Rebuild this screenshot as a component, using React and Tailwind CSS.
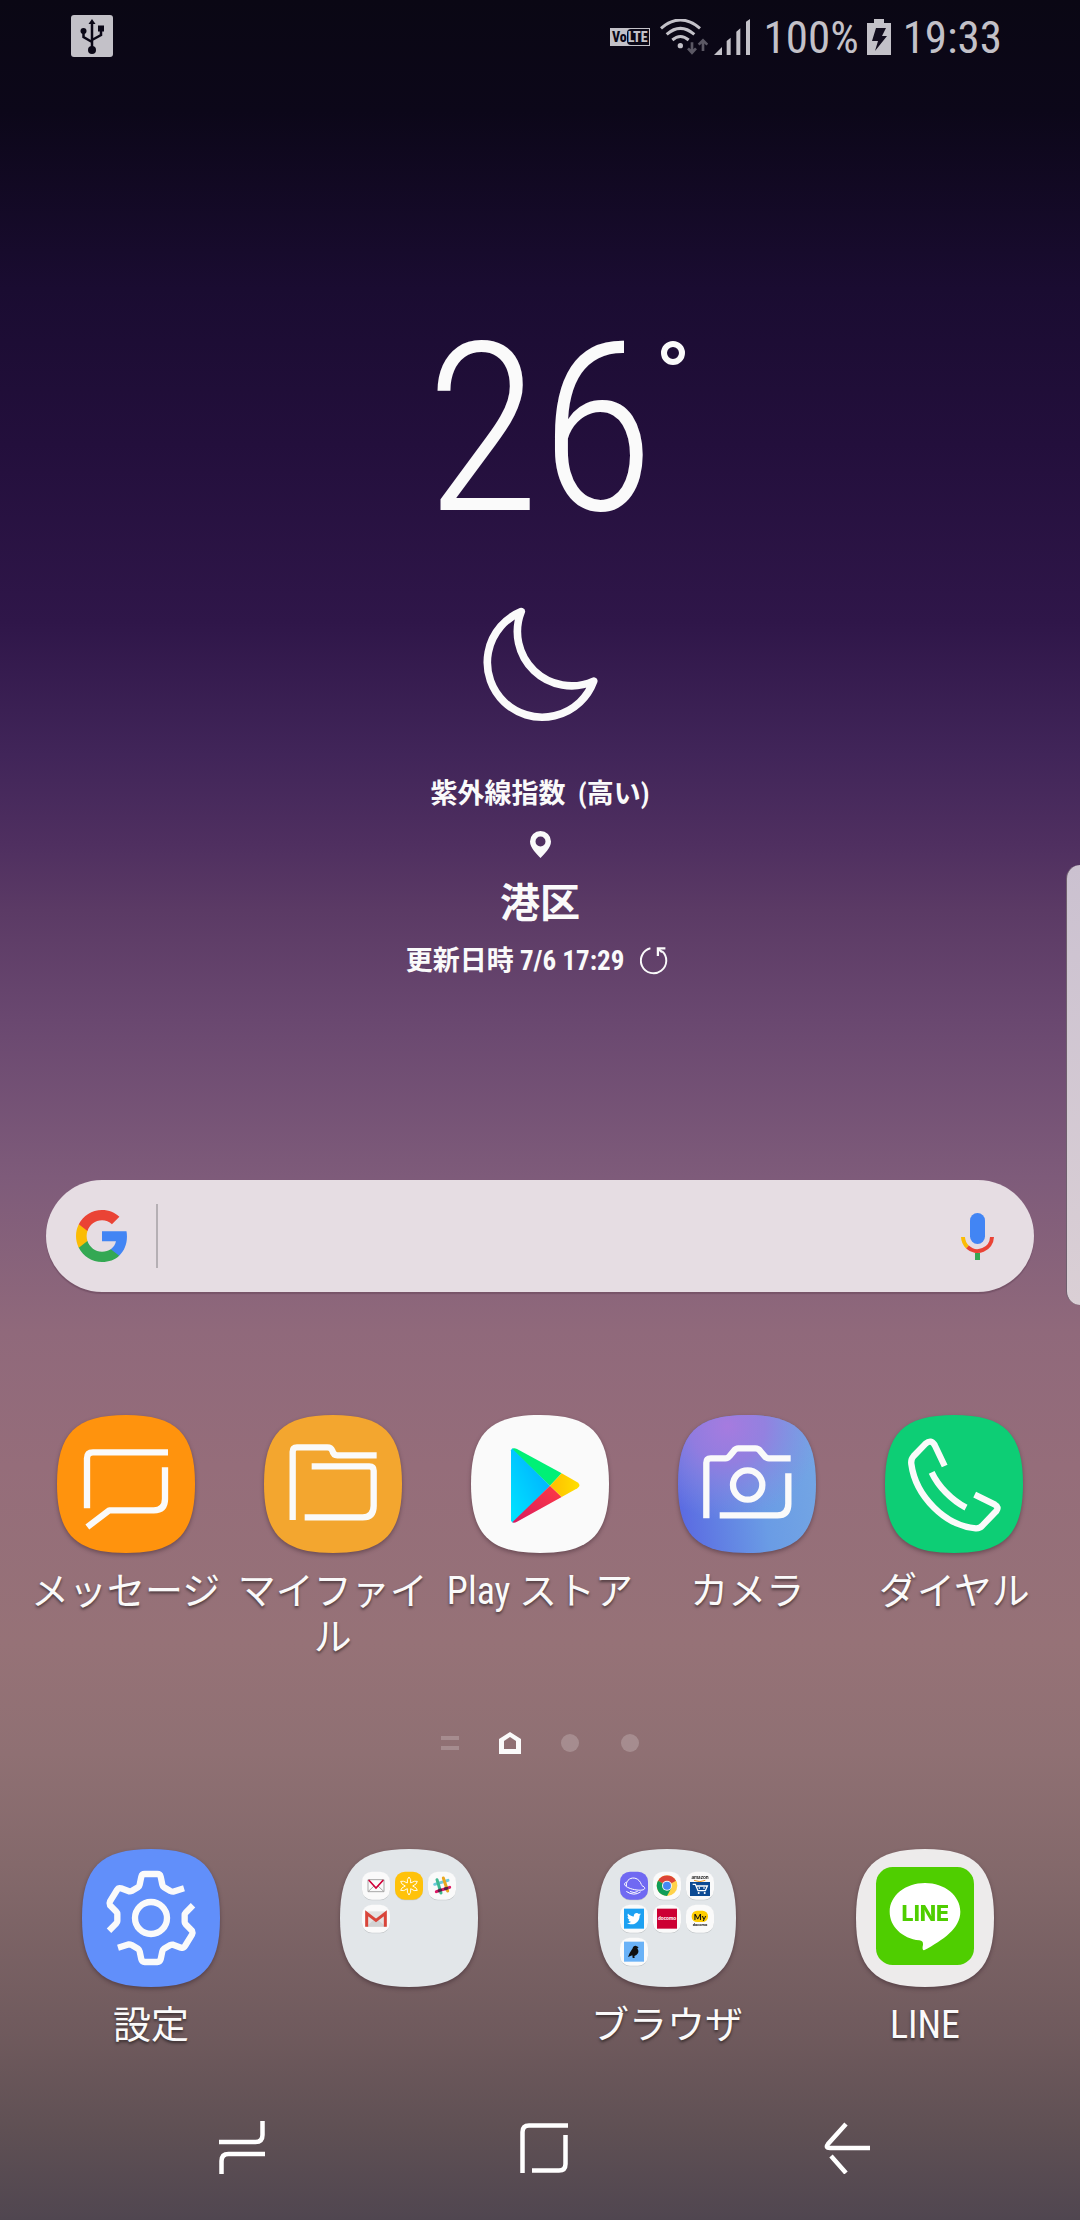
import React from "react";
import { FaTwitter } from "react-icons/fa";

const SQUIRCLE =
  "M0 207 C0 56 56 0 207 0 C358 0 414 56 414 207 C414 358 358 414 207 414 C56 414 0 358 0 207 Z";

function Tile({ fill, children }) {
  return (
    <svg
      viewBox="0 0 414 414"
      className="size-[138px] overflow-visible drop-shadow-[0_2px_2px_rgba(40,20,30,0.4)]"
      fill="none"
      aria-hidden="true"
    >
      <path d={SQUIRCLE} fill={fill} />
      {children}
    </svg>
  );
}

function Lines({ children }) {
  return (
    <g stroke="#fafafa" strokeWidth="19" strokeLinejoin="round">
      {children}
    </g>
  );
}

function Mini({ col, row, fill = "#fafafa", children }) {
  return (
    <g transform={`translate(${66 + col * 99} ${68 + row * 99})`}>
      <rect y="2" width="84" height="84" rx="30" fill="#00000022" />
      <rect width="84" height="84" rx="30" fill={fill} />
      {children}
    </g>
  );
}

function MessagesIcon() {
  return (
    <Tile fill="#ff930d">
      <Lines>
        <path d="M90 280 V130 Q90 112 108 112 H333" />
        <path d="M324 157 V252 Q324 286 290 286 H157 L91 336" />
      </Lines>
    </Tile>
  );
}

function FilesIcon() {
  return (
    <Tile fill="#f3a62f">
      <Lines>
        <path d="M86 315 V110 Q86 97 99 97 H190 Q201 97 205 107 Q208 121 220 121 H338" />
        <path d="M143 154 H316 Q329 154 329 167 V272 Q329 307 296 307 H122" />
      </Lines>
    </Tile>
  );
}

function PlayIcon() {
  return (
    <Tile fill="#fafafa">
      <defs>
        <linearGradient id="playBlue" x1="0" y1="1" x2="1" y2="0">
          <stop offset="0" stopColor="#00e5ff" />
          <stop offset="1" stopColor="#00a8ff" />
        </linearGradient>
        <linearGradient id="playRed" x1="1" y1="0" x2="0" y2="1">
          <stop offset="0" stopColor="#ff3a44" />
          <stop offset="1" stopColor="#d81b60" />
        </linearGradient>
        <linearGradient id="playYellow" x1="1" y1="0" x2="0" y2="0">
          <stop offset="0" stopColor="#ffe000" />
          <stop offset="1" stopColor="#ffbd00" />
        </linearGradient>
      </defs>
      <path d="M120 106 Q121 101 126 100 L237 212 L126 323 Q121 321 120 316 Z" fill="url(#playBlue)" />
      <path d="M124 101 Q130 98 138 102 L272 175 L237 212 Z" fill="#00f076" />
      <path d="M124 322 Q130 325 138 320 L272 246 L237 212 Z" fill="url(#playRed)" />
      <path d="M272 175 L319 202 Q332 211 319 220 L272 246 L237 212 Z" fill="url(#playYellow)" />
    </Tile>
  );
}

function CameraIcon() {
  return (
    <Tile fill="url(#camBase)">
      <defs>
        <linearGradient id="camBase" x1="0" y1="0.6" x2="1" y2="0.45">
          <stop offset="0" stopColor="#5b6be2" />
          <stop offset="0.6" stopColor="#6a9ce5" />
          <stop offset="1" stopColor="#73a5e4" />
        </linearGradient>
        <radialGradient id="camGlow" cx="0.36" cy="0.08" r="0.68">
          <stop offset="0" stopColor="#a67bdf" />
          <stop offset="0.4" stopColor="#9a7cdf" stopOpacity="0.85" />
          <stop offset="1" stopColor="#8a8ce2" stopOpacity="0" />
        </radialGradient>
      </defs>
      <path d={SQUIRCLE} fill="url(#camGlow)" />
      <Lines>
        <path d="M85 310 V143 Q85 130 98 130 H142 Q150 130 155 123 L168 107 Q173 100 181 100 H232 Q241 100 246 107 L260 124 Q265 130 273 130 H338" />
        <path d="M331 175 V266 Q331 301 298 301 H125" />
        <circle cx="209" cy="210" r="44" />
      </Lines>
    </Tile>
  );
}

function PhoneIcon() {
  return (
    <Tile fill="#0dce75">
      <Lines>
        <path d="M179 153 L149 90 Q138 72 122 86 L86 123 Q77 133 79 147 C92 245 182 332 272 340 Q284 341 292 332 L334 288 Q343 276 330 269 L269 239" />
        <path d="M140 172 C160 215 200 255 243 278" />
      </Lines>
    </Tile>
  );
}

function SettingsIcon() {
  const tooth =
    "M306 118 L273 128 Q269 128 265 126 L246 115 Q242 112 241 107 L236 83 Q234 75 226 75 H188 Q180 75 178 83 L173 107 Q172 112 168 115 L149 126 Q145 128 141 127 L117 118 Q109 116 105 123 L84 157 Q81 163 84 169 L103 188 Q106 191 106 195 V216 Q106 220 103 223 L81 245";
  return (
    <Tile fill="#618ffa">
      <Lines>
        <path d={tooth} />
        <path d={tooth} transform="rotate(180 207 207)" />
        <circle cx="207" cy="207" r="48" />
      </Lines>
    </Tile>
  );
}

function MailFolderIcon() {
  return (
    <Tile fill="#e2e6e9">
      <Mini col={0} row={0}>
        <path d="M18 24 H66 V60 H18 Z M18 60 L36 43 M66 60 L48 43" stroke="#a8a8a8" strokeWidth="3" />
        <path d="M20 25 L42 49 L64 25" stroke="#d00039" strokeWidth="5" />
      </Mini>
      <Mini col={1} row={0} fill="#ffc20a">
        <g stroke="#fffdf2" strokeWidth="3" fill="none" strokeLinejoin="round">
          <path d="M42 16 Q49 22 47 34 Q59 26 67 29 Q66 38 53 43 Q66 48 67 56 Q58 60 47 51 Q49 63 42 70 Q35 63 37 51 Q26 60 17 56 Q18 48 31 43 Q18 38 17 29 Q25 26 37 34 Q35 22 42 16 Z" />
        </g>
      </Mini>
      <Mini col={2} row={0}>
        <g strokeWidth="9" strokeLinecap="round">
          <path d="M20 38 L60 26" stroke="#6ecadc" />
          <path d="M25 60 L65 47" stroke="#e01765" />
          <path d="M27 24 L39 64" stroke="#3eb991" />
          <path d="M46 19 L59 58" stroke="#e9a820" />
          <path d="M33 57 L38 55 M52 51 L57 50" stroke="#5a2045" />
        </g>
      </Mini>
      <Mini col={0} row={1}>
        <rect x="12" y="20" width="60" height="46" fill="#e3e3e3" />
        <path d="M12 66 L42 40 L72 66 Z" fill="#d2d2d2" />
        <path d="M14 66 V26 L42 47 L70 26 V66" stroke="#d9453a" strokeWidth="9" />
      </Mini>
    </Tile>
  );
}

function BrowserFolderIcon() {
  return (
    <Tile fill="#e2e6e9">
      <Mini col={0} row={0} fill="#7069f2">
        <g stroke="#fff" strokeWidth="3" fill="none" strokeLinecap="round">
          <path d="M19 42 C16 16 54 8 64 38" />
          <path d="M18 32 C4 38 22 50 44 54 C76 60 82 48 66 42" />
          <path d="M20 60 Q42 75 61 61 M31 60 Q43 66 52 60" />
        </g>
      </Mini>
      <Mini col={1} row={0}>
        <circle cx="42" cy="42" r="31" fill="#ffd24a" />
        <path d="M42 42 L15 27 A31 31 0 0 1 69 27 Z" fill="#dc4437" />
        <path d="M42 42 L15 27 A31 31 0 0 0 42 73 L55 49 Z" fill="#109d58" />
        <circle cx="42" cy="42" r="15" fill="#f4f4f4" />
        <circle cx="42" cy="42" r="12" fill="#4688f4" />
      </Mini>
      <Mini col={2} row={0}>
        <text x="42" y="23" textAnchor="middle" fontFamily="Lato" fontWeight="700" fontSize="15" fill="#111">amazon</text>
        <path d="M24 26 Q42 34 58 26" stroke="#f39a1f" strokeWidth="3" />
        <rect x="12" y="31" width="60" height="42" fill="#0c4a93" />
        <path d="M20 38 H28 L36 57 H58 L64 43 H32" stroke="#fff" strokeWidth="4" />
        <circle cx="38" cy="64" r="3" fill="#fff" />
        <circle cx="56" cy="64" r="3" fill="#fff" />
        <path d="M40 47 V51 M54 47 V51" stroke="#fff" strokeWidth="4" />
      </Mini>
      <Mini col={0} row={1}>
        <rect x="12" y="12" width="60" height="60" fill="#1da1f2" />
        <FaTwitter x="21" y="21" size={42} color="#fff" />
      </Mini>
      <Mini col={1} row={1}>
        <rect x="12" y="12" width="60" height="60" fill="#cc0033" />
        <text x="42" y="46" textAnchor="middle" fontFamily="Lato" fontWeight="900" fontSize="15" fill="#fff">docomo</text>
      </Mini>
      <Mini col={2} row={1}>
        <rect x="17" y="18" width="49" height="34" rx="16" fill="#ffcd00" />
        <text x="42" y="45" textAnchor="middle" fontFamily="Lato" fontWeight="900" fontSize="25" fill="#111">My</text>
        <text x="42" y="64" textAnchor="middle" fontFamily="Lato" fontWeight="900" fontSize="12" fill="#111">docomo</text>
      </Mini>
      <Mini col={0} row={2}>
        <rect x="12" y="12" width="60" height="60" fill="#6ab2f7" />
        <path d="M38 32 Q39 24 47 24 L56 29 L52 32 Q60 44 49 52 L43 55 L44 61 H38 L37 53 L24 58 L29 46 Z" fill="#101010" />
      </Mini>
    </Tile>
  );
}

function LineIcon() {
  return (
    <Tile fill="#edebeb">
      <rect x="60" y="54" width="294" height="294" rx="50" fill="#4fce00" />
      <path
        d="M207 102 C266 102 313 140 313 188 C313 238 262 272 204 304 Q197 303 201 287 Q202 275 190 274 C138 268 101 232 101 188 C101 140 148 102 207 102 Z"
        fill="#fff"
      />
      <text x="208" y="215" textAnchor="middle" fontFamily="Inter" fontWeight="800" fontSize="64" fill="#4fce00">LINE</text>
    </Tile>
  );
}

function AppButton({ icon: Icon, label, name }) {
  return (
    <button type="button" aria-label={name} className="flex flex-col items-center gap-[15px]">
      <Icon />
      {label && (
        <span className="text-[38px] leading-[46px] text-[#fafafa] [text-shadow:0_2px_3px_rgba(0,0,0,0.5)]">
          {label}
        </span>
      )}
    </button>
  );
}

const APPS = [
  { icon: MessagesIcon, label: "メッセージ" },
  { icon: FilesIcon, label: "マイファイル" },
  { icon: PlayIcon, label: "Play ストア" },
  { icon: CameraIcon, label: "カメラ" },
  { icon: PhoneIcon, label: "ダイヤル" },
];

const DOCK = [
  { icon: SettingsIcon, label: "設定" },
  { icon: MailFolderIcon, name: "フォルダ" },
  { icon: BrowserFolderIcon, label: "ブラウザ" },
  { icon: LineIcon, label: "LINE" },
];

function StatusBar() {
  return (
    <header className="flex h-[72px] items-center justify-between pr-[78px] pl-[71px] text-[#c3c1c8]">
      <svg viewBox="0 0 42 42" className="size-[42px]" aria-label="USB">
        <rect width="42" height="42" rx="3" fill="#c3c1c8" />
        <g stroke="#0a0716" fill="none" strokeWidth="2.5">
          <path d="M21 34 V7 M12.500 16 V22 L21 27 M30 14 V20 L21 25" />
        </g>
        <g fill="#0a0716">
          <path d="M17.500 9 L21 4 L24.500 9 Z" />
          <circle cx="21" cy="35" r="4" />
          <circle cx="12.500" cy="16" r="3" />
          <rect x="27" y="10.500" width="6" height="6" />
        </g>
      </svg>
      <div className="flex items-center pt-0.5">
        <div className="flex h-[18px] items-center bg-[#c3c1c8] pr-px pl-0.5 text-[14px] leading-none font-extrabold text-[#0a0716]">
          Vo
          <span className="flex h-4 items-center rounded-l-sm bg-[#0a0716] px-px text-[#c3c1c8]">LTE</span>
        </div>
        <svg viewBox="0 0 144 108" className="ml-2.5 h-9 w-12" fill="none" aria-label="Wi-Fi">
          <g stroke="#c3c1c8" strokeWidth="9">
            <path d="M3 28 Q61 -22 120 28" />
            <path d="M20 46 Q61 10 103 46" />
            <path d="M37 63 Q61 42 86 63" />
          </g>
          <circle cx="61" cy="80" r="8" fill="#c3c1c8" />
          <path d="M96 70 V98 M84 88 L96 101 L108 88 M129 96 V66 M116 77 L129 64 L142 77" stroke="#5b5864" strokeWidth="8" />
        </svg>
        <svg viewBox="0 0 108 108" className="ml-1.5 size-9" fill="#c3c1c8" aria-label="電波">
          <path d="M0 108 L24 84 V108 Z M38 66 L50 56 V108 H38 Z M67 38 L79 28 V108 H67 Z M96 8 L108 0 V108 H96 Z" />
        </svg>
        <span className="ml-3.5 text-[45px] leading-none">100%</span>
        <svg viewBox="0 0 24 36" className="ml-2 h-9 w-6" aria-label="充電中">
          <path d="M7 0 H17 V4 H24 V36 H0 V4 H7 Z" fill="#c3c1c8" />
          <path d="M9 9 H19 L15 17 H20 L8 32 L11 22 H5 Z" fill="#120d1e" />
        </svg>
        <time className="ml-3 text-[45px] leading-none">19:33</time>
      </div>
    </header>
  );
}

function Weather() {
  return (
    <section className="mt-[228px] flex flex-col items-center font-bold text-[#fafafa]">
      <p className="relative text-[236px] leading-[260px] font-light">
        26
        <svg viewBox="0 0 24 24" className="absolute top-[41px] left-full ml-1.5 size-6" fill="none" aria-label="度">
          <rect x="3" y="3" width="18" height="18" rx="9" stroke="#fafafa" strokeWidth="6" />
        </svg>
      </p>
      <svg viewBox="248 890 344 346" className="mt-[47px] size-[115px]" fill="none" aria-label="晴れ（夜）">
        <path
          d="M362 904 A165 165 0 1 0 580 1113 A163 163 0 0 1 362 904 Z"
          stroke="#fafafa"
          strokeWidth="23"
          strokeLinejoin="round"
        />
      </svg>
      <p className="mt-[52px] text-[27px] leading-10">
        紫外線指数&nbsp; (高い)
      </p>
      <svg viewBox="0 0 21 27" className="mt-[17px] h-[27px] w-[21px]" aria-hidden="true">
        <path
          d="M10.500 0 A10.500 10.500 0 0 1 21 10.500 C21 17 14 23 10.500 27 C7 23 0 17 0 10.500 A10.500 10.500 0 0 1 10.500 0 Z M10.500 5.500 A5 5 0 1 0 10.500 15.500 A5 5 0 1 0 10.500 5.500 Z"
          fill="#fafafa"
          fillRule="evenodd"
        />
      </svg>
      <p className="mt-[18px] text-[40px] leading-[56px]">港区</p>
      <div className="mt-[9px] mr-1.5 flex h-10 items-center gap-4 text-[27px] leading-10">
        <span>更新日時 7/6 17:29</span>
        <button type="button" aria-label="更新">
          <svg viewBox="782 560 86 86" className="size-7" fill="none">
            <path d="M814 564 A39 39 0 1 0 850 573" stroke="#fafafa" strokeWidth="6" />
            <path d="M837 588 V564 H860" stroke="#fafafa" strokeWidth="7" />
            <path d="M838 566 L850 576" stroke="#fafafa" strokeWidth="7" />
          </svg>
        </button>
      </div>
    </section>
  );
}

function SearchBar() {
  return (
    <form className="mx-[46px] mt-[199px] flex h-28 items-center rounded-full bg-[#e6dde3] pr-10 pl-[30px] shadow-[0_2px_1px_rgba(60,30,50,0.25)]">
      <svg viewBox="1 1 22 22" className="size-[52px]" aria-label="Google">
        <path fill="#4285f4" d="M22.560 12.250c0-.78-.07-1.530-.2-2.250H12v4.260h5.920c-.26 1.370-1.040 2.530-2.210 3.310v2.770h3.570c2.080-1.920 3.280-4.740 3.280-8.090z" />
        <path fill="#34a853" d="M12 23c2.970 0 5.460-.98 7.280-2.660l-3.570-2.770c-.98.66-2.230 1.060-3.710 1.060-2.860 0-5.290-1.930-6.160-4.530H2.180v2.840C3.990 20.530 7.700 23 12 23z" />
        <path fill="#fbbc05" d="M5.840 14.090c-.22-.66-.35-1.360-.35-2.090s.13-1.430.35-2.090V7.070H2.180C1.430 8.550 1 10.220 1 12s.43 3.450 1.180 4.930l3.660-2.840z" />
        <path fill="#ea4335" d="M12 5.380c1.620 0 3.060.56 4.210 1.640l3.150-3.150C17.450 2.090 14.970 1 12 1 7.700 1 3.990 3.470 2.180 7.070l3.660 2.840c.87-2.600 3.300-4.530 6.160-4.530z" />
      </svg>
      <input
        type="search"
        aria-label="検索"
        className="ml-7 h-16 min-w-0 flex-1 border-l-2 border-[#b5afb4] bg-transparent px-6 text-[38px] text-[#333333] outline-none"
      />
      <button type="button" aria-label="音声検索">
        <svg viewBox="0 0 33 47" className="h-[47px] w-[33px]" fill="none">
          <rect x="9" width="15" height="31" rx="7.500" fill="#4285f4" />
          <path d="M2 24 A14.500 14.500 0 0 0 6.500 34" stroke="#fbbc05" strokeWidth="4" />
          <path d="M6.500 34 A14.500 14.500 0 0 0 31 24" stroke="#ea4335" strokeWidth="4" />
          <rect x="14" y="40" width="5" height="7" fill="#34a853" />
        </svg>
      </button>
    </form>
  );
}

function PageIndicator() {
  return (
    <div className="mt-[70px] flex h-[26px] items-center justify-center gap-[42px]">
      <div className="flex w-[18px] flex-col gap-1.5">
        <span className="h-1 bg-white/20" />
        <span className="h-1 bg-white/20" />
      </div>
      <svg viewBox="0 0 22 22" className="-mx-0.5 size-[22px]" aria-label="ホーム">
        <path d="M11 0 L22 7 V22 H0 V7 Z M11 5 L5 9 V17 H17 V9 Z" fill="#fafafa" fillRule="evenodd" />
      </svg>
      <span className="size-[18px] rounded-full bg-white/20" />
      <span className="size-[18px] rounded-full bg-white/20" />
    </div>
  );
}

function NavBar() {
  return (
    <nav className="mt-[73px] grid grid-cols-3 items-center justify-items-center pr-[82px] pl-[91px]">
      <button type="button" aria-label="履歴">
        <svg viewBox="0 0 46 53" className="h-[53px] w-[46px]" fill="none" stroke="#fff" strokeWidth="4.500">
          <path d="M43.500 0 V14 Q43.500 21 36.500 21 H0 M2.500 53 V40 Q2.500 33 9.500 33 H46" />
        </svg>
      </button>
      <button type="button" aria-label="ホーム">
        <svg viewBox="0 0 48 50" className="h-[50px] w-12" fill="none" stroke="#fff" strokeWidth="4.500">
          <path d="M2.500 50 V9 Q2.500 2.500 9 2.500 H48 M45.500 12 V41 Q45.500 47.500 39 47.500 H12" />
        </svg>
      </button>
      <button type="button" aria-label="戻る">
        <svg viewBox="0 0 46 52" className="h-[52px] w-[46px]" fill="none" stroke="#fff" strokeWidth="4.500">
          <path d="M22 2 L4 22 Q1 26 6 26 H46 M7 34 L22 51" />
        </svg>
      </button>
    </nav>
  );
}

export default function App() {
  return (
    <div
      lang="ja"
      className="relative min-h-screen overflow-hidden bg-[linear-gradient(180deg,#0a0714_0%,#0c0719_5%,#1a0c31_13%,#230f3c_20%,#2f1649_28%,#412559_34%,#4f2f60_38%,#5b3a65_41%,#6a4870_46%,#7e5b7a_53%,#90697b_60%,#956d7a_66%,#967277_74%,#8f7073_79%,#84696b_84%,#6e595c_92%,#5f5054_96%,#504650_100%)] pb-10 font-['Roboto_Condensed','Liberation_Sans_Narrow',Roboto,'Noto_Sans_CJK_JP',sans-serif]"
    >
      <StatusBar />
      <main>
        <Weather />
        <SearchBar />
        <section className="mt-[123px] grid grid-cols-5 items-start px-[22px]">
          {APPS.map((app) => (
            <AppButton key={app.label} {...app} />
          ))}
        </section>
        <PageIndicator />
        <section className="mt-[93px] grid grid-cols-4 items-start pr-[26px] pl-[22px]">
          {DOCK.map((app) => (
            <AppButton key={app.label || app.name} {...app} />
          ))}
        </section>
      </main>
      <NavBar />
      <div className="absolute top-[865px] right-0 h-[440px] w-[14px] rounded-l-[14px] border-l border-[#6f5f6d] bg-linear-to-b from-[#cbc1d0] to-[#dacfd5]" />
    </div>
  );
}
